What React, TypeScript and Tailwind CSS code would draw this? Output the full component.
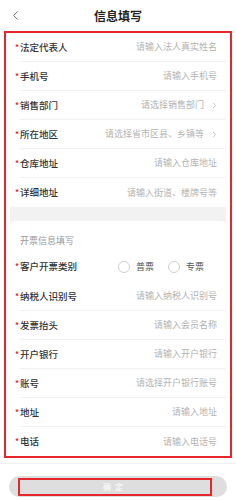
import { ChevronLeft, ChevronRight } from "lucide-react";

type Row = { label: string; placeholder: string; arrow?: boolean };

const baseRows: Row[] = [
    { label: "法定代表人", placeholder: "请输入法人真实姓名" },
    { label: "手机号", placeholder: "请输入手机号" },
    { label: "销售部门", placeholder: "请选择销售部门", arrow: true },
    { label: "所在地区", placeholder: "请选择省市区县、乡镇等", arrow: true },
    { label: "仓库地址", placeholder: "请输入仓库地址" },
    { label: "详细地址", placeholder: "请输入街道、楼牌号等" },
];

const invoiceRows: Row[] = [
    { label: "纳税人识别号", placeholder: "请输入纳税人识别号" },
    { label: "发票抬头", placeholder: "请输入会员名称" },
    { label: "开户银行", placeholder: "请输入开户银行" },
    { label: "账号", placeholder: "请选择开户银行账号" },
    { label: "地址", placeholder: "请输入地址" },
    { label: "电话", placeholder: "请输入电话号" },
];

function Star() {
    return (
        <span className="flex w-[5px] items-center">
            <span className="-mt-[2px] text-[8px] font-bold leading-none text-[#e5262a]">*</span>
        </span>
    );
}

function FormRow({ row, last }: { row: Row; last?: boolean }) {
    return (
        <div className="flex h-[29px] pl-[5px]">
            <Star />
            <div
                className={`flex flex-1 items-center justify-between pr-[9px] ${
                    last ? "" : "border-b border-[#efefef]"
                }`}
            >
                <span className="text-[9.5px] font-medium text-[#333]">{row.label}</span>
                <span className="flex items-center text-[9px] text-[#b3b3b3]">
                    {row.placeholder}
                    {row.arrow && (
                        <ChevronRight size={9} strokeWidth={1.6} className="ml-[6px] -mr-[2px] text-[#999]" />
                    )}
                </span>
            </div>
        </div>
    );
}

function Radio({ label }: { label: string }) {
    return (
        <span className="flex items-center gap-[6px]">
            <span className="h-[12px] w-[12px] rounded-full border border-[#cfcfcf] bg-white" />
            <span className="text-[9px] text-[#555]">{label}</span>
        </span>
    );
}

export default function App() {
    return (
        <div
            className="flex h-[500px] w-[236px] flex-col bg-white"
            style={{ fontFamily: '"Noto Sans CJK SC", "Noto Sans", sans-serif' }}
        >
            <div className="relative flex h-[31px] shrink-0 items-center justify-center">
                <ChevronLeft size={15} strokeWidth={1.4} className="absolute left-[8px] top-[8px] text-[#555]" />
                <h1 className="text-[12px] font-bold text-[#222]">信息填写</h1>
            </div>

            <div className="mx-[4px] border-2 border-[#e5262a]">
                <div className="px-[4px]">
                    <div className="rounded-b-[5px] bg-white">
                        {baseRows.map((r, i) => (
                            <FormRow key={r.label} row={r} last={i === baseRows.length - 1} />
                        ))}
                    </div>
                    <div className="h-[18px] bg-[#f2f2f2]" />
                    <div className="-mt-[4px] rounded-t-[5px] bg-white">
                        <div className="flex h-[30px] items-end pb-[4px] pl-[10px] text-[9px] text-[#999]">
                            开票信息填写
                        </div>
                        <div className="flex h-[31px] pl-[5px]">
                            <Star />
                            <div className="flex flex-1 items-center justify-between pr-[22px]">
                                <span className="text-[9.5px] font-medium text-[#333]">客户开票类别</span>
                                <span className="flex items-center gap-[14px]">
                                    <Radio label="普票" />
                                    <Radio label="专票" />
                                </span>
                            </div>
                        </div>
                        {invoiceRows.map((r, i) => (
                            <FormRow key={r.label} row={r} last={i === invoiceRows.length - 1} />
                        ))}
                    </div>
                </div>
            </div>

            <div className="mt-[5px] flex flex-1 flex-col border-t border-[#f0f0f0] px-[9px] pt-[12px]">
                <button className="flex h-[21px] w-full items-center rounded-full bg-[#dedede] pl-[9px] pr-[15px]">
                    <span className="flex h-[18px] flex-1 items-center justify-center border-2 border-[#e5262a] text-[8px] tracking-[4px] text-white">
                        确定
                    </span>
                </button>
            </div>
        </div>
    );
}
